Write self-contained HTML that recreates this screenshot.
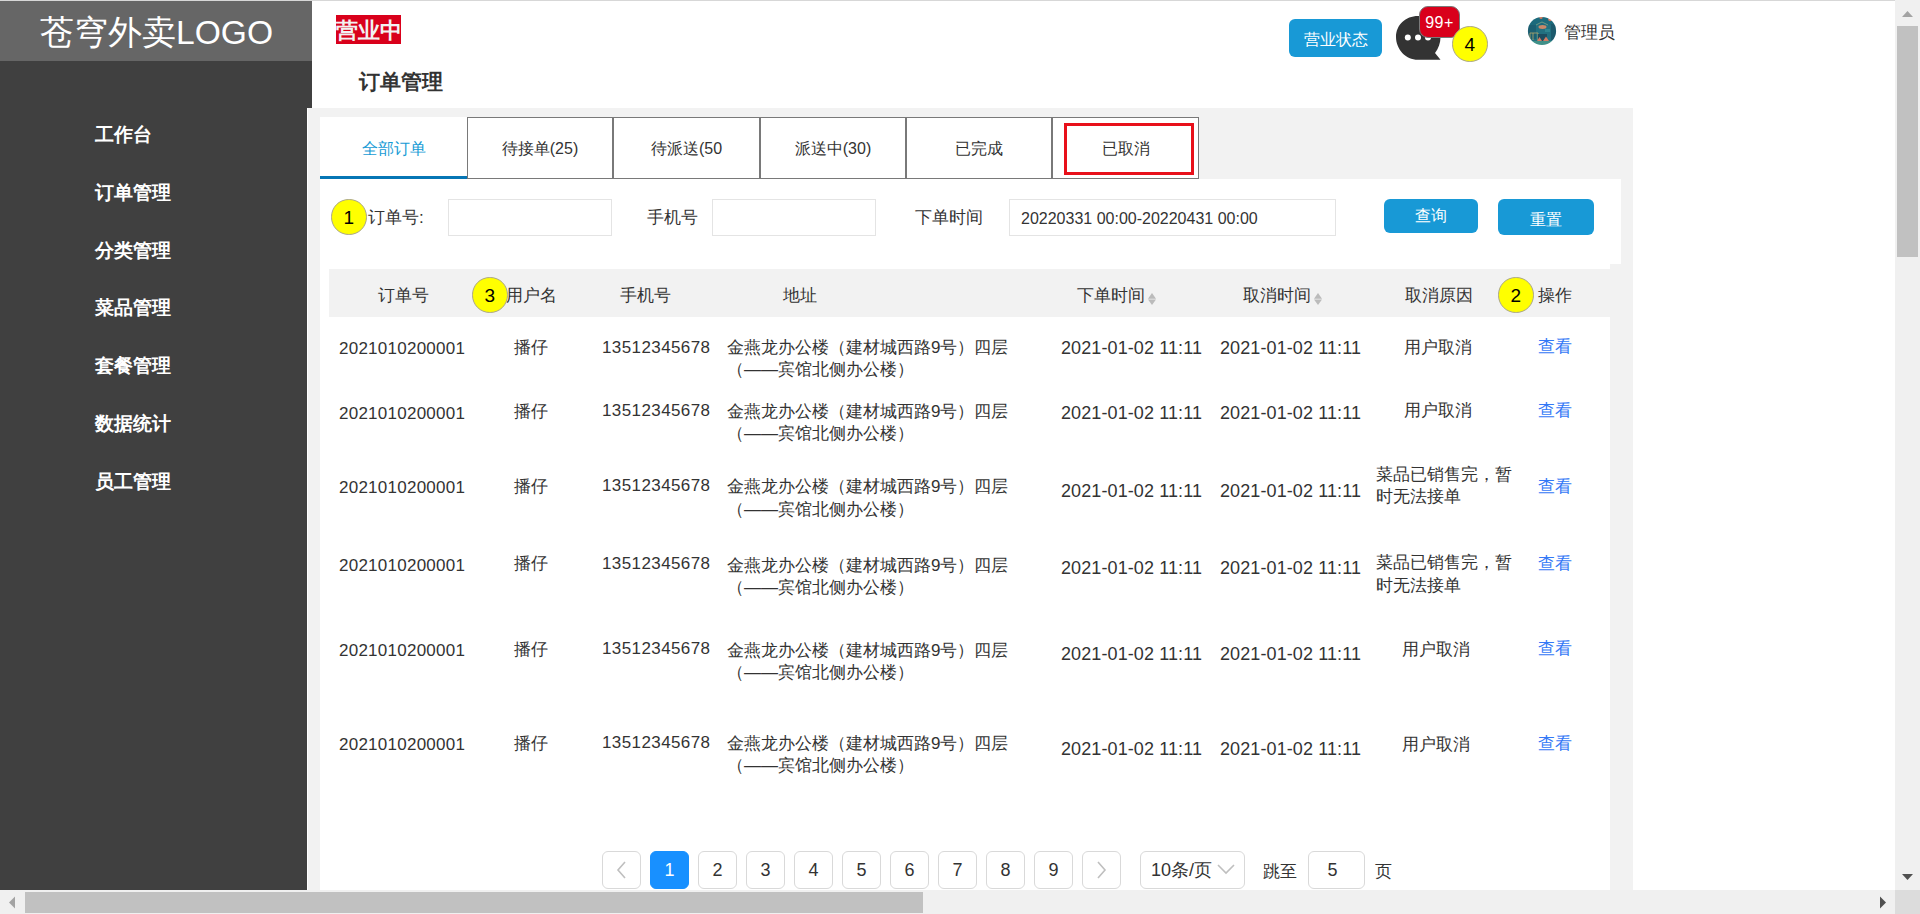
<!DOCTYPE html>
<html><head><meta charset="utf-8">
<style>
*{margin:0;padding:0;box-sizing:border-box}
html,body{width:1920px;height:914px;overflow:hidden;background:#fff;font-family:"Liberation Sans",sans-serif;color:#333}
.a{position:absolute;white-space:nowrap}
#topline{left:0;top:0;width:1895px;height:1px;background:#d7d7d7}
#logo{left:0;top:1px;width:312px;height:60px;background:#666}
#logotxt{left:40px;top:13px;font-size:33.6px;color:#fff;line-height:40px}
#side{left:0;top:61px;width:312px;height:829px;background:#404040}
.menu{left:95px;font-size:19.2px;font-weight:bold;color:#fff;line-height:30px}
#open{left:336px;top:15px;width:65px;height:29px;background:#d9001b;color:#f2f2f2;font-size:22px;font-weight:bold;line-height:31px;overflow:hidden;text-align:center}
#title{left:358.5px;top:67px;font-size:21.4px;font-weight:bold;color:#333;line-height:30px}
#panel{left:307px;top:108px;width:1326px;height:782px;background:#f2f2f2;border-left:1px solid #fff}
.tab{top:117px;height:62px;background:#fff;border:1px solid #797979;font-size:16px;text-align:center;line-height:62px;color:#333}
#search{left:320px;top:179px;width:1301px;height:85px;background:#fff}
#table{left:320px;top:264px;width:1290px;height:626px;background:#fff}
#thead{left:329px;top:269px;width:1281px;height:48px;background:#f2f2f2}
.th{font-size:16.5px;line-height:30px;color:#333;top:280px}
.td{font-size:17px;line-height:30px;color:#333}
.dt{font-size:18px;line-height:30px;color:#333;letter-spacing:.1px}
.mark{z-index:2;width:35.5px;height:35.5px;border-radius:50%;background:#ff0;border:1.5px solid #aaa68a;font-size:19px;color:#000;text-align:center;line-height:35px}
.inp{top:199px;height:37px;border:1px solid #e4e4e4;background:#fff}
.btn{background:#1899d6;color:#fff;border-radius:6px;text-align:center;font-size:16px}
.pg{top:851px;width:39px;height:38px;border:1px solid #d9d9d9;border-radius:6px;background:#fff;text-align:center;line-height:37px;font-size:18px;color:#333}
.link{color:#3478f6}
.addr{line-height:22.5px}
</style></head><body>
<div class="a" id="topline"></div>
<div class="a" id="logo"></div>
<div class="a" id="logotxt">苍穹外卖LOGO</div>
<div class="a" id="side"></div>
<div class="a menu" style="top:120px">工作台</div>
<div class="a menu" style="top:178px">订单管理</div>
<div class="a menu" style="top:236px">分类管理</div>
<div class="a menu" style="top:293px">菜品管理</div>
<div class="a menu" style="top:351px">套餐管理</div>
<div class="a menu" style="top:409px">数据统计</div>
<div class="a menu" style="top:467px">员工管理</div>

<div class="a" id="open">营业中</div>
<div class="a" id="title">订单管理</div>

<div class="a btn" style="left:1289px;top:19px;width:93px;height:38px;line-height:42px">营业状态</div>

<!-- chat icon -->
<svg class="a" style="left:1390px;top:10px" width="60" height="56" viewBox="0 0 60 56">
  <path d="M28 6 C15.5 6 6 15 6 27 C6 39 15.5 49.8 28 49.8 L50.5 49.8 L45 43 C48.5 38.5 50.5 33 50.5 27 C50.5 15 40.5 6 28 6 Z" fill="#333"/>
  <circle cx="17.8" cy="27.5" r="3" fill="#fff"/>
  <circle cx="28" cy="27.5" r="3" fill="#fff"/>
  <circle cx="38" cy="27.5" r="3" fill="#fff"/>
</svg>
<div class="a" style="left:1419px;top:6px;width:41px;height:32px;background:#d9001b;border:1px solid #7a7a7a;border-radius:9px;color:#fff;font-size:16px;text-align:center;line-height:32px;letter-spacing:.5px">99+</div>
<div class="a mark" style="left:1452px;top:26px">4</div>

<!-- avatar -->
<svg class="a" style="left:1527px;top:16px" width="30" height="30" viewBox="0 0 30 30">
  <defs><clipPath id="cav"><circle cx="15" cy="15" r="14.1"/></clipPath>
  <filter id="bl" x="-10%" y="-10%" width="120%" height="120%"><feGaussianBlur stdDeviation="0.55"/></filter></defs>
  <g clip-path="url(#cav)">
    <g filter="url(#bl)">
    <rect width="30" height="30" fill="#236f80"/>
    <rect x="0" y="0" width="30" height="9" fill="#1f6a7c"/>
    <rect x="0" y="9" width="9" height="14" fill="#1b5f72"/>
    <rect x="24" y="8" width="6" height="16" fill="#1a5a6c"/>
    <circle cx="14" cy="1.5" r="1.6" fill="#c8765c"/>
    <circle cx="23" cy="3.5" r="1.8" fill="#d27a62"/>
    <ellipse cx="15.5" cy="11" rx="4" ry="1.9" fill="#c98868"/>
    <path d="M9 9 L15 6 L21 9" stroke="#8fae8a" stroke-width=".7" fill="none"/>
    <path d="M3 17 L11 17 L11 24 M3 17 L3 24 M6 17 L6 24" stroke="#b7a86a" stroke-width=".8" fill="none"/>
    <rect x="11" y="18" width="9" height="7" fill="#1a4e60"/>
    <path d="M10 25 L12.5 21 L15 25 Z" fill="#d47a62"/>
    <path d="M16 25 L19 20.5 L22 25 Z" fill="#d47a62"/>
    <rect x="0" y="25" width="30" height="5" fill="#3f9088"/>
    <rect x="18" y="13" width="5" height="3" fill="#2d8590"/>
    </g>
  </g>
</svg>
<div class="a" style="left:1564px;top:18px;font-size:17px;line-height:30px;color:#333">管理员</div>

<div class="a" id="panel"></div>

<!-- tabs -->
<div class="a" style="left:320px;top:117px;width:147px;height:62px;background:#fff;border-bottom:3px solid #0676b5"></div>
<div class="a" style="left:320px;top:134px;width:147px;text-align:center;font-size:16px;line-height:30px;color:#169bd5">全部订单</div>
<div class="a tab" style="left:467px;width:146px">待接单(25)</div>
<div class="a tab" style="left:613px;width:147px">待派送(50</div>
<div class="a tab" style="left:760px;width:146px">派送中(30)</div>
<div class="a tab" style="left:906px;width:146px">已完成</div>
<div class="a tab" style="left:1052px;width:147px">已取消</div>
<div class="a" style="left:1064px;top:123px;width:130px;height:52px;border:3px solid #e8101a"></div>

<div class="a" id="search"></div>
<div class="a mark" style="left:331px;top:199px">1</div>
<div class="a" style="left:368px;top:203px;font-size:17px;line-height:30px">订单号:</div>
<div class="a inp" style="left:448px;width:164px"></div>
<div class="a" style="left:647px;top:202px;font-size:16.5px;line-height:30px">手机号</div>
<div class="a inp" style="left:712px;width:164px"></div>
<div class="a" style="left:915px;top:202px;font-size:16.5px;line-height:30px">下单时间</div>
<div class="a inp" style="left:1009px;width:327px"></div>
<div class="a" style="left:1021px;top:204px;font-size:16px;line-height:30px">20220331 00:00-20220431 00:00</div>
<div class="a btn" style="left:1384px;top:199px;width:94px;height:34px;line-height:34px">查询</div>
<div class="a btn" style="left:1498px;top:199px;width:96px;height:36px;line-height:41px">重置</div>

<div class="a" id="table"></div>
<div class="a" id="thead"></div>
<div class="a th" style="left:378px">订单号</div>
<div class="a mark" style="left:472px;top:277px">3</div>
<div class="a th" style="left:506px">用户名</div>
<div class="a th" style="left:620px">手机号</div>
<div class="a th" style="left:783px">地址</div>
<div class="a th" style="left:1077px">下单时间</div>
<div class="a th" style="left:1243px">取消时间</div>
<div class="a th" style="left:1405px">取消原因</div>
<div class="a mark" style="left:1498px;top:277px">2</div>
<div class="a th" style="left:1538px">操作</div>

<!-- rows -->
<div class="a td" style="left:339px;top:334px;letter-spacing:.25px">2021010200001</div>
<div class="a td" style="left:514px;top:333px">播仔</div>
<div class="a td" style="left:602px;top:332.5px;letter-spacing:.4px">13512345678</div>
<div class="a td addr" style="left:727px;top:336.7px">金燕龙办公楼（建材城西路9号）四层<br>（——宾馆北侧办公楼）</div>
<div class="a dt" style="left:1061px;top:333px">2021-01-02 11:11</div>
<div class="a dt" style="left:1220px;top:333px">2021-01-02 11:11</div>
<div class="a td" style="left:1404px;top:333px">用户取消</div>
<div class="a td link" style="left:1538px;top:332px">查看</div>

<div class="a td" style="left:339px;top:399px;letter-spacing:.25px">2021010200001</div>
<div class="a td" style="left:514px;top:397px">播仔</div>
<div class="a td" style="left:602px;top:396px;letter-spacing:.4px">13512345678</div>
<div class="a td addr" style="left:727px;top:400.8px">金燕龙办公楼（建材城西路9号）四层<br>（——宾馆北侧办公楼）</div>
<div class="a dt" style="left:1061px;top:398px">2021-01-02 11:11</div>
<div class="a dt" style="left:1220px;top:398px">2021-01-02 11:11</div>
<div class="a td" style="left:1404px;top:396px">用户取消</div>
<div class="a td link" style="left:1538px;top:396px">查看</div>

<div class="a td" style="left:339px;top:473px;letter-spacing:.25px">2021010200001</div>
<div class="a td" style="left:514px;top:471.5px">播仔</div>
<div class="a td" style="left:602px;top:471px;letter-spacing:.4px">13512345678</div>
<div class="a td addr" style="left:727px;top:476.3px">金燕龙办公楼（建材城西路9号）四层<br>（——宾馆北侧办公楼）</div>
<div class="a dt" style="left:1061px;top:476px">2021-01-02 11:11</div>
<div class="a dt" style="left:1220px;top:476px">2021-01-02 11:11</div>
<div class="a td addr" style="left:1376px;top:463.5px">菜品已销售完，暂<br>时无法接单</div>
<div class="a td link" style="left:1538px;top:471.5px">查看</div>

<div class="a td" style="left:339px;top:551px;letter-spacing:.25px">2021010200001</div>
<div class="a td" style="left:514px;top:549px">播仔</div>
<div class="a td" style="left:602px;top:548.5px;letter-spacing:.4px">13512345678</div>
<div class="a td addr" style="left:727px;top:554.7px">金燕龙办公楼（建材城西路9号）四层<br>（——宾馆北侧办公楼）</div>
<div class="a dt" style="left:1061px;top:553px">2021-01-02 11:11</div>
<div class="a dt" style="left:1220px;top:553px">2021-01-02 11:11</div>
<div class="a td addr" style="left:1376px;top:552.2px">菜品已销售完，暂<br>时无法接单</div>
<div class="a td link" style="left:1538px;top:548.5px">查看</div>

<div class="a td" style="left:339px;top:636px;letter-spacing:.25px">2021010200001</div>
<div class="a td" style="left:514px;top:635px">播仔</div>
<div class="a td" style="left:602px;top:634px;letter-spacing:.4px">13512345678</div>
<div class="a td addr" style="left:727px;top:639.5px">金燕龙办公楼（建材城西路9号）四层<br>（——宾馆北侧办公楼）</div>
<div class="a dt" style="left:1061px;top:638.5px">2021-01-02 11:11</div>
<div class="a dt" style="left:1220px;top:638.5px">2021-01-02 11:11</div>
<div class="a td" style="left:1402px;top:635px">用户取消</div>
<div class="a td link" style="left:1538px;top:634px">查看</div>

<div class="a td" style="left:339px;top:729.5px;letter-spacing:.25px">2021010200001</div>
<div class="a td" style="left:514px;top:729px">播仔</div>
<div class="a td" style="left:602px;top:728px;letter-spacing:.4px">13512345678</div>
<div class="a td addr" style="left:727px;top:732.5px">金燕龙办公楼（建材城西路9号）四层<br>（——宾馆北侧办公楼）</div>
<div class="a dt" style="left:1061px;top:734px">2021-01-02 11:11</div>
<div class="a dt" style="left:1220px;top:734px">2021-01-02 11:11</div>
<div class="a td" style="left:1402px;top:730px">用户取消</div>
<div class="a td link" style="left:1538px;top:729px">查看</div>

<!-- sort icons -->
<svg class="a" style="left:1147px;top:292px" width="10" height="14" viewBox="0 0 10 14"><path d="M1 6.7 L5 1 L9 6.7Z M1 7.5 L5 13 L9 7.5Z" fill="#bbb"/></svg>
<svg class="a" style="left:1313px;top:292px" width="10" height="14" viewBox="0 0 10 14"><path d="M1 6.7 L5 1 L9 6.7Z M1 7.5 L5 13 L9 7.5Z" fill="#bbb"/></svg>

<!-- pagination -->
<div class="a pg" style="left:602px"><svg width="37" height="36" viewBox="0 0 37 36"><path d="M22 10 L15 18 L22 26" stroke="#bfbfbf" stroke-width="1.6" fill="none"/></svg></div>
<div class="a pg" style="left:650px;background:#1890ff;border-color:#1890ff;color:#fff">1</div>
<div class="a pg" style="left:698px">2</div>
<div class="a pg" style="left:746px">3</div>
<div class="a pg" style="left:794px">4</div>
<div class="a pg" style="left:842px">5</div>
<div class="a pg" style="left:890px">6</div>
<div class="a pg" style="left:938px">7</div>
<div class="a pg" style="left:986px">8</div>
<div class="a pg" style="left:1034px">9</div>
<div class="a pg" style="left:1082px"><svg width="37" height="36" viewBox="0 0 37 36"><path d="M15 10 L22 18 L15 26" stroke="#bfbfbf" stroke-width="1.6" fill="none"/></svg></div>
<div class="a pg" style="left:1140px;width:105px;text-align:left;padding-left:10px">10条/页</div>
<svg class="a" style="left:1216px;top:863px" width="20" height="14" viewBox="0 0 20 14"><path d="M2 2 L10 10 L18 2" stroke="#bfbfbf" stroke-width="1.6" fill="none"/></svg>
<div class="a" style="left:1263px;top:857px;font-size:17px;line-height:30px">跳至</div>
<div class="a pg" style="left:1308px;width:57px;padding-right:8px">5</div>
<div class="a" style="left:1375px;top:857px;font-size:17px;line-height:30px">页</div>

<!-- scrollbars -->
<div class="a" style="left:1895px;top:0;width:25px;height:890px;background:#f0f0f0"></div>
<div class="a" style="left:1897px;top:26px;width:21px;height:231px;background:#c1c1c1"></div>
<svg class="a" style="left:1895px;top:0" width="25" height="26" viewBox="0 0 25 26"><path d="M7 17 L12.5 11 L18 17Z" fill="#a3a3a3"/></svg>
<svg class="a" style="left:1895px;top:864px" width="25" height="26" viewBox="0 0 25 26"><path d="M7 10 L12.5 16 L18 10Z" fill="#505050"/></svg>
<div class="a" style="left:0;top:890px;width:1895px;height:24px;background:#f0f0f0"></div>
<div class="a" style="left:25px;top:892px;width:898px;height:21px;background:#c1c1c1"></div>
<svg class="a" style="left:0;top:890px" width="25" height="24" viewBox="0 0 25 24"><path d="M15 6.5 L9 12.5 L15 18.5Z" fill="#a3a3a3"/></svg>
<svg class="a" style="left:1870px;top:890px" width="25" height="24" viewBox="0 0 25 24"><path d="M10 6.5 L16 12.5 L10 18.5Z" fill="#505050"/></svg>
<div class="a" style="left:1895px;top:890px;width:25px;height:24px;background:#dcdcdc"></div>

</body></html>
